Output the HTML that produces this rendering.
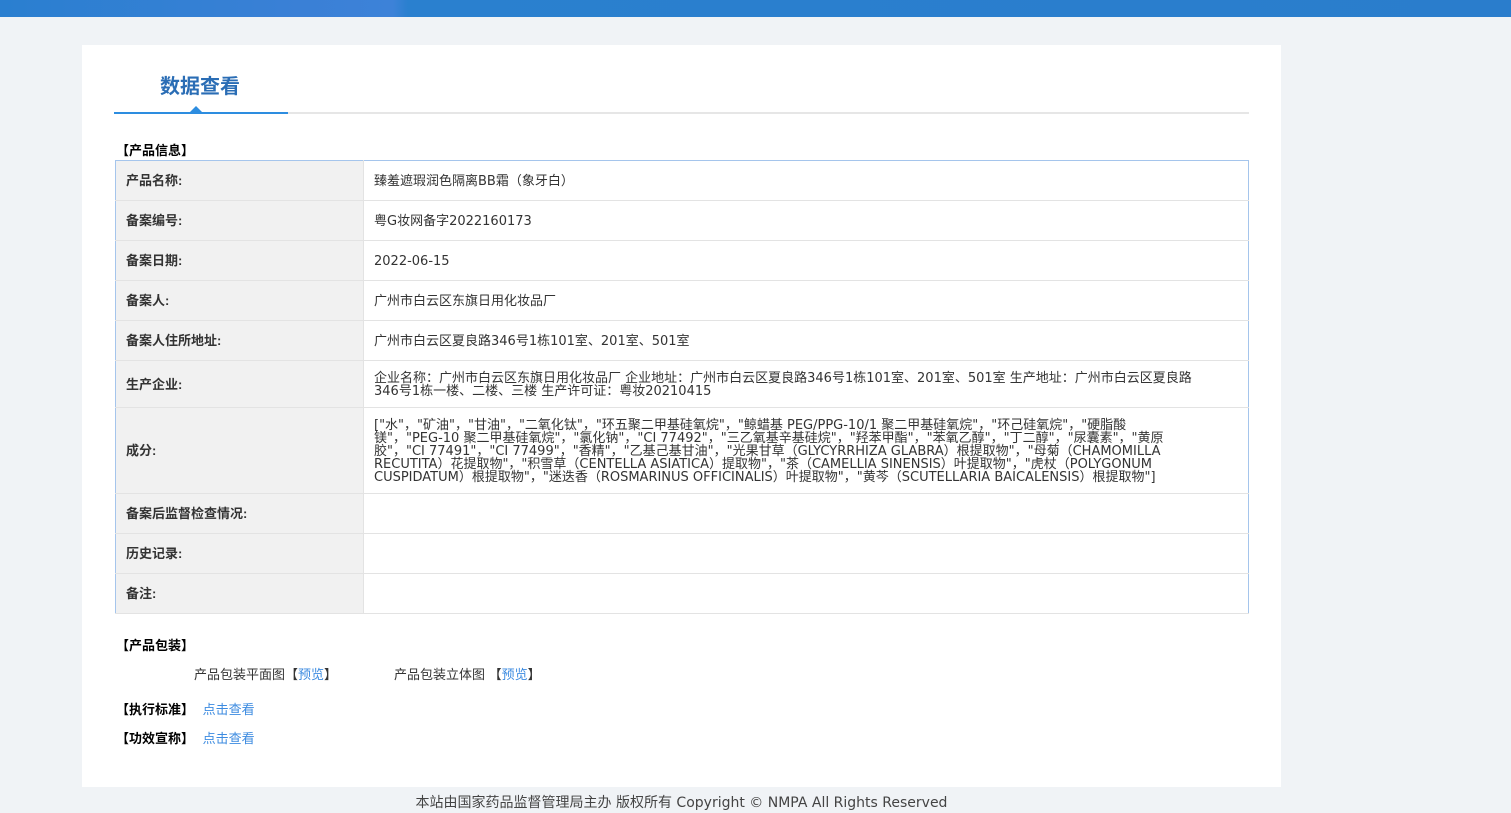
<!DOCTYPE html>
<html><head><meta charset="utf-8"><style>
*{margin:0;padding:0;box-sizing:border-box}
body{width:1511px;height:813px;background:#f0f3f6;font-family:"Liberation Sans","Noto Sans CJK SC",sans-serif;font-size:13px;color:#333;position:relative;overflow:hidden}
.top{position:absolute;left:0;top:0;width:1511px;height:17px;background:linear-gradient(90deg,#2a7fd0 0%,#3a80d6 20%,#3d82d8 26%,#2a80cf 27%,#2a7dcc 100%)}
.card{position:absolute;left:82px;top:45px;width:1199px;height:742px;background:#fff}
.title{position:absolute;left:160px;top:70px;font-size:20px;font-weight:bold;color:#2a6db5}
.line{position:absolute;left:114px;top:112px;width:1135px;height:2px;background:#e6e6e6}
.line2{position:absolute;left:114px;top:112px;width:174px;height:2px;background:#2d8de0}
.tri{position:absolute;left:190px;top:106px;width:0;height:0;border-left:6px solid transparent;border-right:6px solid transparent;border-bottom:6px solid #2d8de0}
.h{position:absolute;left:116px;font-weight:bold;color:#000;font-size:13px}
table{position:absolute;left:115px;top:160px;width:1134px;border-collapse:collapse;border:1px solid #a5c5ec}
td{border-bottom:1px solid #e3e3e3;vertical-align:middle;font-size:13px;line-height:13px}
td.l{width:248px;background:#f1f1f1;font-weight:bold;padding-left:10px;color:#333;border-right:1px solid #e3e3e3}
td.v{padding-left:10px;padding-top:2px;color:#333;font-family:"DejaVu Sans","Noto Sans CJK SC",sans-serif}
a{color:#3c8be0;text-decoration:none}
.t{position:absolute;font-size:13px}
.foot{position:absolute;top:792px;left:0;width:1363px;text-align:center;font-size:14px;color:#444;font-family:"DejaVu Sans","Noto Sans CJK SC",sans-serif}
</style></head><body>
<div class="top"></div>
<div class="card"></div>
<div class="title">数据查看</div>
<div class="line"></div><div class="line2"></div><div class="tri"></div>
<div class="h" style="top:140px">【产品信息】</div>
<table>
<tr style="height:40px"><td class="l">产品名称:</td><td class="v">臻羞遮瑕润色隔离BB霜（象牙白）</td></tr>
<tr style="height:40px"><td class="l">备案编号:</td><td class="v">粤G妆网备字2022160173</td></tr>
<tr style="height:40px"><td class="l">备案日期:</td><td class="v">2022-06-15</td></tr>
<tr style="height:40px"><td class="l">备案人:</td><td class="v">广州市白云区东旗日用化妆品厂</td></tr>
<tr style="height:40px"><td class="l">备案人住所地址:</td><td class="v">广州市白云区夏良路346号1栋101室、201室、501室</td></tr>
<tr style="height:47px"><td class="l">生产企业:</td><td class="v" style="padding-right:50px">企业名称：广州市白云区东旗日用化妆品厂 企业地址：广州市白云区夏良路346号1栋101室、201室、501室 生产地址：广州市白云区夏良路346号1栋一楼、二楼、三楼 生产许可证：粤妆20210415</td></tr>
<tr style="height:86px"><td class="l">成分:</td><td class="v" style="padding-right:80px">["水"，"矿油"，"甘油"，"二氧化钛"，"环五聚二甲基硅氧烷"，"鲸蜡基 PEG/PPG-10/1 聚二甲基硅氧烷"，"环己硅氧烷"，"硬脂酸镁"，"PEG-10 聚二甲基硅氧烷"，"氯化钠"，"CI 77492"，"三乙氧基辛基硅烷"，"羟苯甲酯"，"苯氧乙醇"，"丁二醇"，"尿囊素"，"黄原胶"，"CI 77491"，"CI 77499"，"香精"，"乙基己基甘油"，"光果甘草（GLYCYRRHIZA GLABRA）根提取物"，"母菊（CHAMOMILLA RECUTITA）花提取物"，"积雪草（CENTELLA ASIATICA）提取物"，"茶（CAMELLIA SINENSIS）叶提取物"，"虎杖（POLYGONUM CUSPIDATUM）根提取物"，"迷迭香（ROSMARINUS OFFICINALIS）叶提取物"，"黄芩（SCUTELLARIA BAICALENSIS）根提取物"]</td></tr>
<tr style="height:40px"><td class="l">备案后监督检查情况:</td><td class="v"></td></tr>
<tr style="height:40px"><td class="l">历史记录:</td><td class="v"></td></tr>
<tr style="height:40px"><td class="l">备注:</td><td class="v"></td></tr>
</table>
<div class="h" style="top:635px">【产品包装】</div>
<div class="t" style="left:194px;top:664px">产品包装平面图【<a>预览</a>】</div>
<div class="t" style="left:394px;top:664px">产品包装立体图 【<a>预览</a>】</div>
<div class="h" style="top:699px">【执行标准】 <a style="font-weight:normal;margin-left:5px">点击查看</a></div>
<div class="h" style="top:728px">【功效宣称】 <a style="font-weight:normal;margin-left:5px">点击查看</a></div>
<div class="foot">本站由国家药品监督管理局主办 版权所有 Copyright © NMPA All Rights Reserved</div>
</body></html>
